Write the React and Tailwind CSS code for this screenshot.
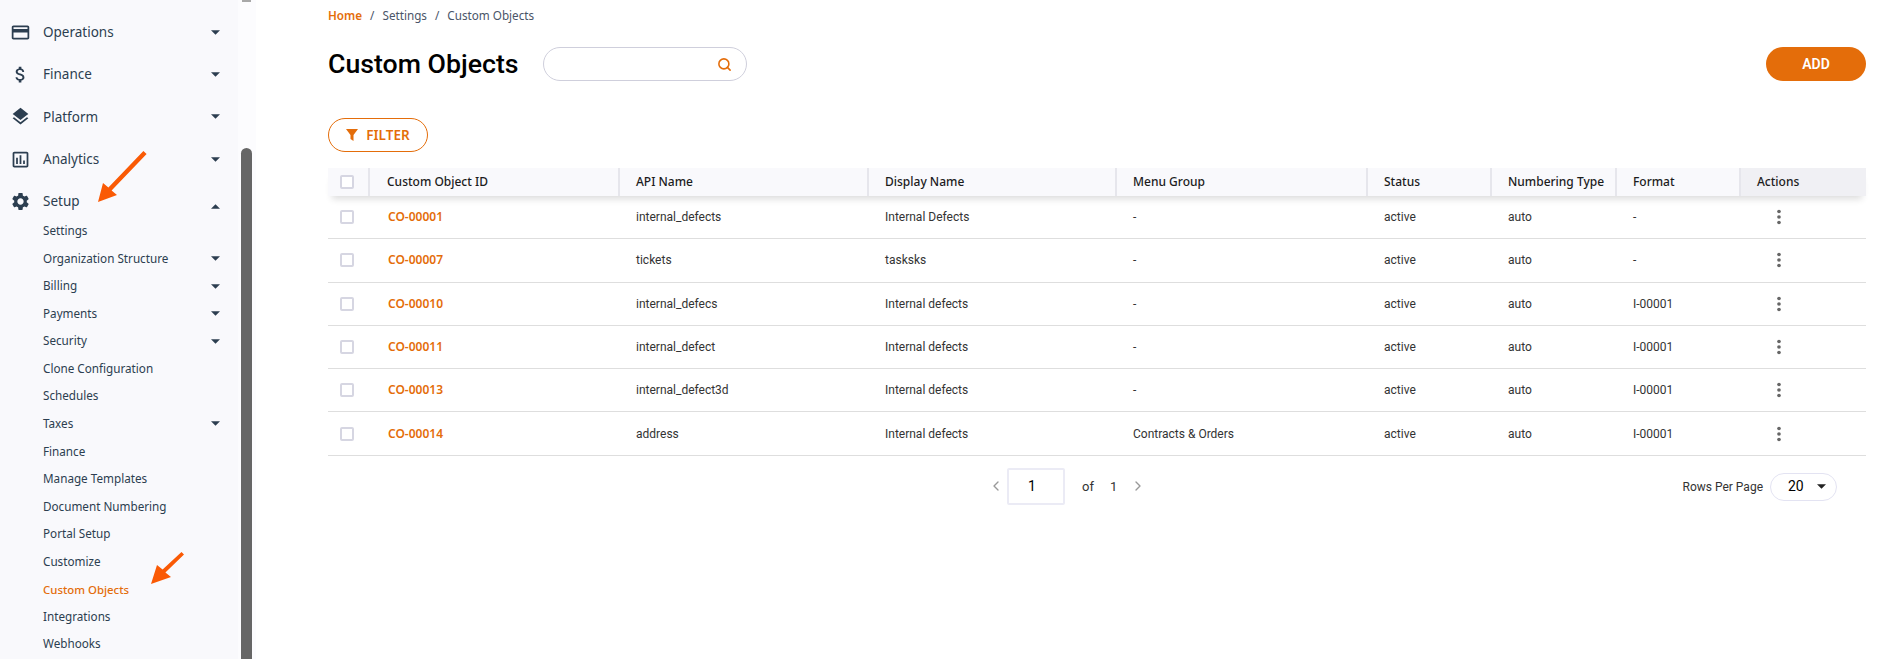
import { ChevronLeft, ChevronRight, Search } from "lucide-react";

const sans = "font-['Noto_Sans',sans-serif]";
const roboto = "font-['Roboto',sans-serif]";

const mainNav = [
  { label: "Operations", icon: "card" },
  { label: "Finance", icon: "dollar" },
  { label: "Platform", icon: "layers" },
  { label: "Analytics", icon: "chart" },
];

const setupLinks = [
  { label: "Settings" },
  { label: "Organization Structure", caret: true },
  { label: "Billing", caret: true },
  { label: "Payments", caret: true },
  { label: "Security", caret: true },
  { label: "Clone Configuration" },
  { label: "Schedules" },
  { label: "Taxes", caret: true },
  { label: "Finance" },
  { label: "Manage Templates" },
  { label: "Document Numbering" },
  { label: "Portal Setup" },
  { label: "Customize" },
  { label: "Custom Objects", active: true },
  { label: "Integrations" },
  { label: "Webhooks" },
];

const columns = ["Custom Object ID", "API Name", "Display Name", "Menu Group", "Status", "Numbering Type", "Format"];

const rows = [
  ["CO-00001", "internal_defects", "Internal Defects", "-", "active", "auto", "-"],
  ["CO-00007", "tickets", "tasksks", "-", "active", "auto", "-"],
  ["CO-00010", "internal_defecs", "Internal defects", "-", "active", "auto", "I-00001"],
  ["CO-00011", "internal_defect", "Internal defects", "-", "active", "auto", "I-00001"],
  ["CO-00013", "internal_defect3d", "Internal defects", "-", "active", "auto", "I-00001"],
  ["CO-00014", "address", "Internal defects", "Contracts & Orders", "active", "auto", "I-00001"],
];

const gridCols = "grid grid-cols-[42px_250px_249px_248px_251px_124px_125px_124px_125px]";

const NavIcon = ({ name }) => {
  const paths = {
    card: "M20 4H4c-1.11 0-1.99.89-1.99 2L2 18c0 1.11.89 2 2 2h16c1.11 0 2-.89 2-2V6c0-1.11-.89-2-2-2zm0 14H4v-6h16v6zm0-10H4V6h16v2z",
    dollar: "M11.8 10.9c-2.27-.59-3-1.2-3-2.15 0-1.09 1.01-1.85 2.7-1.85 1.78 0 2.44.85 2.5 2.1h2.21c-.07-1.72-1.12-3.3-3.21-3.81V3h-3v2.16c-1.94.42-3.5 1.68-3.5 3.61 0 2.31 1.91 3.46 4.7 4.13 2.5.6 3 1.48 3 2.41 0 .69-.49 1.79-2.7 1.79-2.06 0-2.87-.92-2.98-2.1h-2.2c.12 2.19 1.76 3.42 3.68 3.83V21h3v-2.15c1.95-.37 3.5-1.5 3.5-3.55 0-2.84-2.43-3.81-4.7-4.4z",
    layers: "M11.99 18.54l-7.37-5.73L3 14.07l9 7 9-7-1.63-1.27-7.38 5.74zM12 16l7.36-5.73L21 9l-9-7-9 7 1.63 1.27L12 16z",
    chart: "M19 3H5c-1.1 0-2 .9-2 2v14c0 1.1.9 2 2 2h14c1.1 0 2-.9 2-2V5c0-1.1-.9-2-2-2zm0 16H5V5h14v14zM7 10h2v7H7v-7zm4-3h2v10h-2V7zm4 6h2v4h-2v-4z",
    gear: "M19.14 12.94c.04-.3.06-.61.06-.94 0-.32-.02-.64-.07-.94l2.03-1.58c.18-.14.23-.41.12-.61l-1.92-3.32c-.12-.22-.37-.29-.59-.22l-2.39.96c-.5-.38-1.03-.7-1.62-.94l-.36-2.54c-.04-.24-.24-.41-.48-.41h-3.84c-.24 0-.43.17-.47.41l-.36 2.54c-.59.24-1.13.57-1.62.94l-2.39-.96c-.22-.08-.47 0-.59.22L2.74 8.87c-.12.21-.08.47.12.61l2.03 1.58c-.05.3-.09.63-.09.94s.02.64.07.94l-2.03 1.58c-.18.14-.23.41-.12.61l1.92 3.32c.12.22.37.29.59.22l2.39-.96c.5.38 1.03.7 1.62.94l.36 2.54c.05.24.24.41.48.41h3.84c.24 0 .44-.17.47-.41l.36-2.54c.59-.24 1.13-.56 1.62-.94l2.39.96c.22.08.47 0 .59-.22l1.92-3.32c.12-.22.07-.47-.12-.61l-2.01-1.58zM12 15.6c-1.98 0-3.6-1.62-3.6-3.6s1.62-3.6 3.6-3.6 3.6 1.62 3.6 3.6-1.62 3.6-3.6 3.6z",
  };
  return (
    <svg viewBox="0 0 24 24" className="w-[21px] h-[21px] fill-[#2c3e50] shrink-0">
      <path d={paths[name]} />
    </svg>
  );
};

const Caret = ({ up = false, className = "fill-[#2c3e50]" }) => (
  <svg viewBox="0 0 10 5" className={`w-[9px] h-[5px] ${className}`}>
    <path d={up ? "M0 5 L5 0 L10 5 Z" : "M0 0 L5 5 L10 0 Z"} />
  </svg>
);

const Checkbox = () => (
  <span className="block w-[14px] h-[14px] border-2 border-[#d6d6e2] rounded-[2px] bg-white" />
);

const Sidebar = () => (
  <aside className={`w-[256px] shrink-0 h-[659px] overflow-hidden relative flex ${sans}`}>
    <div className="w-[238px] bg-[#f9f9fc] pt-[11px]">
      {mainNav.map((item) => (
        <div key={item.label} className="h-[42.3px] flex items-center pl-[10px] pr-[18px] text-[13.5px] text-[#2c3e50]">
          <NavIcon name={item.icon} />
          <span className="ml-[12px] flex-1">{item.label}</span>
          <Caret />
        </div>
      ))}
      <div className="h-[42px] flex items-center pl-[10px] pr-[18px] text-[13.5px] text-[#2c3e50]">
        <NavIcon name="gear" />
        <span className="ml-[12px] flex-1">Setup</span>
        <span className="mt-[10px]">
          <Caret up />
        </span>
      </div>
      <div className="-mt-[5px]">
        {setupLinks.map((link) => (
          <div
            key={link.label}
            className={`h-[27.55px] flex items-center pl-[43px] pr-[18px] ${
              link.active ? "text-[11.4px] text-[#e46d0a] font-medium" : "text-[11.7px] text-[#2c3e50]"
            }`}
          >
            <span className="flex-1">{link.label}</span>
            {link.caret && <Caret />}
          </div>
        ))}
      </div>
    </div>
    <div className="flex-1 bg-[#fcfcfe] pl-[3px] pt-[148px]">
      <div className="w-[11px] h-full rounded-t-[6px] bg-[#666666]" />
    </div>
    <div className="absolute left-[242px] top-0 w-[9px] h-[2px] bg-[#a8a8a8]" />
    {/* annotation arrows */}
    <svg viewBox="0 0 50 52" className="absolute left-[97px] top-[151px] w-[50px] h-[52px]">
      <path d="M1 51 L6 32 L11.4 36.5 L46.4 0 L49.6 3 L14.6 39.5 L20 44 Z" fill="#fa5a05" />
    </svg>
    <svg viewBox="0 0 34 34" className="absolute left-[150px] top-[552px] w-[34px] h-[34px]">
      <path d="M1 32 L7 13 L12.6 17.5 L31.5 0 L34 2.5 L15.4 20.5 L21 25 Z" fill="#fa5a05" />
    </svg>
  </aside>
);

const DataTable = () => (
  <div className="w-[1538px]">
    <div className={`${gridCols} h-[28px] bg-[#f9f9fc] shadow-[0_7px_7px_-4px_rgba(0,0,0,0.14)] relative text-[12px] font-medium text-[#1c1c1c] ${sans}`}>
      <div className="flex items-center pl-[12px] border-r-2 border-[#e6e6ec]">
        <Checkbox />
      </div>
      {columns.map((col, i) => (
        <div key={col} className={`flex items-center border-r-2 border-[#e6e6ec] ${i === 0 ? "pl-[17px]" : "pl-[16px]"}`}>
          {col}
        </div>
      ))}
      <div className="flex items-center pl-[16px] bg-[#f0f0f4]">Actions</div>
    </div>
    {rows.map((row) => (
      <div key={row[0]} className={`${gridCols} h-[43.3px] border-b border-[#dedede] text-[12px] text-[#333333] ${roboto}`}>
        <div className="flex items-center pl-[12px]">
          <Checkbox />
        </div>
        <div className={`flex items-center pl-[18px] text-[#e46d0a] font-semibold ${sans}`}>{row[0]}</div>
        {row.slice(1).map((cell, i) => (
          <div key={i} className="flex items-center pl-[16px]">
            {cell}
          </div>
        ))}
        <div className="flex items-center pl-[27px]">
          <svg viewBox="0 0 24 24" className="w-[22px] h-[22px] fill-[#666666]">
            <circle cx="12" cy="6" r="2" />
            <circle cx="12" cy="12" r="2" />
            <circle cx="12" cy="18" r="2" />
          </svg>
        </div>
      </div>
    ))}
  </div>
);

const Pagination = () => (
  <div className={`w-[1538px] mt-[12px] flex items-start text-[12px] text-[#333333] ${roboto}`}>
    <div className="ml-[660px] flex items-center">
      <ChevronLeft className="w-[16px] h-[16px] text-[#999999]" />
      <span className="ml-[3px] w-[58px] h-[37px] border-2 border-[#ebebf5] rounded-[2px] flex items-center pl-[19px] text-[14px] text-black">
        1
      </span>
      <span className="ml-[17px] text-[13px]">of</span>
      <span className="ml-[16px] text-[13px]">1</span>
      <ChevronRight className="ml-[13px] w-[16px] h-[16px] text-[#999999]" />
    </div>
    <div className="ml-auto mr-[29px] mt-[5px] flex items-center">
      <span>Rows Per Page</span>
      <div className="ml-[7px] w-[67px] h-[28px] border border-[#e3e3f2] rounded-full flex items-center pl-[17px] pr-[10px] text-[14px] text-black">
        <span className="flex-1">20</span>
        <Caret className="fill-[#222222]" />
      </div>
    </div>
  </div>
);

export default function App() {
  return (
    <div className="flex w-[1880px] h-[659px] overflow-hidden bg-white">
      <Sidebar />
      <main className={`flex-1 pl-[72px] ${roboto}`}>
        <nav className={`h-[31px] flex items-center text-[11.7px] text-[#4a5568] ${sans}`}>
          <span className="text-[#e46d0a] font-semibold">Home</span>
          <span className="mx-[8px]">/</span>
          <span>Settings</span>
          <span className="mx-[8px]">/</span>
          <span>Custom Objects</span>
        </nav>
        <div className="w-[1538px] h-[34px] mt-[16px] flex items-center">
          <h1 className="text-[26.7px] font-medium text-black">Custom Objects</h1>
          <div className="ml-[24px] w-[204px] h-[34px] border border-[#cfcfdc] rounded-full flex items-center justify-end pr-[14px]">
            <Search className="w-[15px] h-[15px] text-[#e46d0a]" strokeWidth={2.5} />
          </div>
          <button className="ml-auto w-[100px] h-[34px] rounded-full bg-[#e46d0a] text-white text-[14px] font-semibold">
            ADD
          </button>
        </div>
        <button className={`mt-[37px] w-[100px] h-[34px] border border-[#e46d0a] rounded-full flex items-center justify-center gap-[8px] text-[#e46d0a] text-[13.5px] font-semibold ${sans}`}>
          <svg viewBox="0 0 12 12" className="w-[12px] h-[12px] fill-[#e46d0a]">
            <path d="M0 0 H12 L7.5 6 V12 L4.5 10 V6 Z" />
          </svg>
          FILTER
        </button>
        <div className="mt-[16px]">
          <DataTable />
          <Pagination />
        </div>
      </main>
    </div>
  );
}
